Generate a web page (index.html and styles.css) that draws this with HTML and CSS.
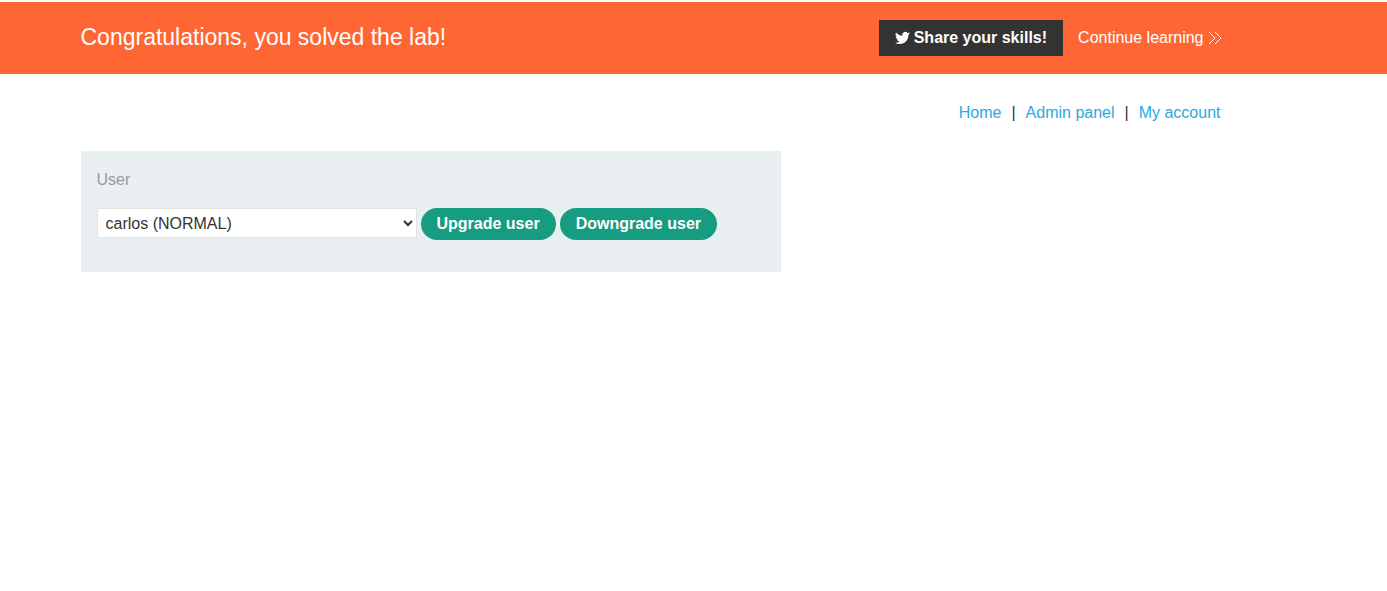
FILE: index.html
```html
<!DOCTYPE html>
<html lang="en">
<head>
<meta charset="utf-8">
<meta name="viewport" content="width=device-width, initial-scale=1">
<title>Admin panel</title>
<link rel="stylesheet" href="styles.css">
</head>
<body>
<header class="banner">
  <div class="container banner-row">
    <h1 class="banner-title">Congratulations, you solved the lab!</h1>
    <div class="banner-actions">
      <button class="share" type="button">
        <svg class="bird" viewBox="0 0 24 24" aria-hidden="true"><path d="M23.95 4.57a10 10 0 0 1-2.82.77 4.96 4.96 0 0 0 2.16-2.72c-.95.55-2 .95-3.13 1.18a4.92 4.92 0 0 0-8.38 4.48C7.69 8.09 4.07 6.13 1.64 3.16a4.92 4.92 0 0 0 1.52 6.57 4.9 4.9 0 0 1-2.23-.61v.06a4.92 4.92 0 0 0 3.95 4.83 5 5 0 0 1-2.21.08 4.94 4.94 0 0 0 4.6 3.42A9.87 9.87 0 0 1 0 19.54a14 14 0 0 0 7.55 2.21c9.05 0 14-7.5 14-13.98 0-.21 0-.42-.02-.63a9.94 9.94 0 0 0 2.46-2.55z"/></svg>
        <span>Share your skills!</span>
      </button>
      <a class="continue" href="#">Continue learning<svg class="chevrons" viewBox="0 0 13 14" aria-hidden="true"><path d="M1 1l6 6-6 6M7 1l6 6-6 6"/></svg></a>
    </div>
  </div>
</header>
<main class="container">
  <nav class="links">
    <a href="#">Home</a><span>|</span><a href="#">Admin panel</a><span>|</span><a href="#">My account</a>
  </nav>
  <form class="panel">
    <label class="label" for="user">User</label>
    <div class="controls">
      <select class="user" id="user"><option>carlos (NORMAL)</option></select>
      <button class="pill" type="button">Upgrade user</button>
      <button class="pill" type="button">Downgrade user</button>
    </div>
  </form>
</main>
</body>
</html>
```
FILE: styles.css
```css
* { box-sizing: border-box; }
body {
  margin: 0;
  padding-top: 2px;
  background: #fff;
  color: #333332;
  font: 16px/20px "Liberation Sans", Arial, sans-serif;
}
.container {
  max-width: 1226px;
  margin: 0 auto;
  padding-right: 86px;
}
.banner { background: #ff6633; color: #fff; }
.banner-row {
  display: flex;
  align-items: center;
  justify-content: space-between;
  padding-top: 18px;
  padding-bottom: 18px;
}
.banner-title { margin: 0; padding-bottom: 2px; font-size: 23px; line-height: 32px; font-weight: 400; }
.banner-actions { display: flex; align-items: center; gap: 15px; }
.share {
  display: flex;
  align-items: center;
  gap: 4px;
  padding: 8px 16px;
  border: 0;
  background: #333332;
  color: #fff;
  font: inherit;
  font-weight: 700;
}
.bird { width: 15px; height: 16px; fill: #fff; }
.continue { display: flex; align-items: center; gap: 4px; color: #fff; text-decoration: none; }
.chevrons { width: 13px; height: 14px; overflow: visible; fill: none; stroke: #fff; stroke-width: 1; }
.links {
  display: flex;
  justify-content: flex-end;
  gap: 10px;
  padding: 29px 0 28px;
}
.links a { color: #29a9e0; text-decoration: none; }
.panel { max-width: 700px; padding: 19px 16px 32px; background: #eaeff2; }
.label { display: block; color: #999; }
.controls { display: flex; flex-wrap: wrap; gap: 4px; padding-top: 18px; }
.user {
  width: 320px;
  height: 30px;
  padding: 0 4px;
  border: 1px solid #e3e4e0;
  border-radius: 0;
  background: #fff;
  color: #333332;
  font: inherit;
}
.pill {
  padding: 6px 16px;
  border: 0;
  border-radius: 16px;
  background: #169c80;
  color: #fff;
  font: inherit;
  font-weight: 700;
}
```
